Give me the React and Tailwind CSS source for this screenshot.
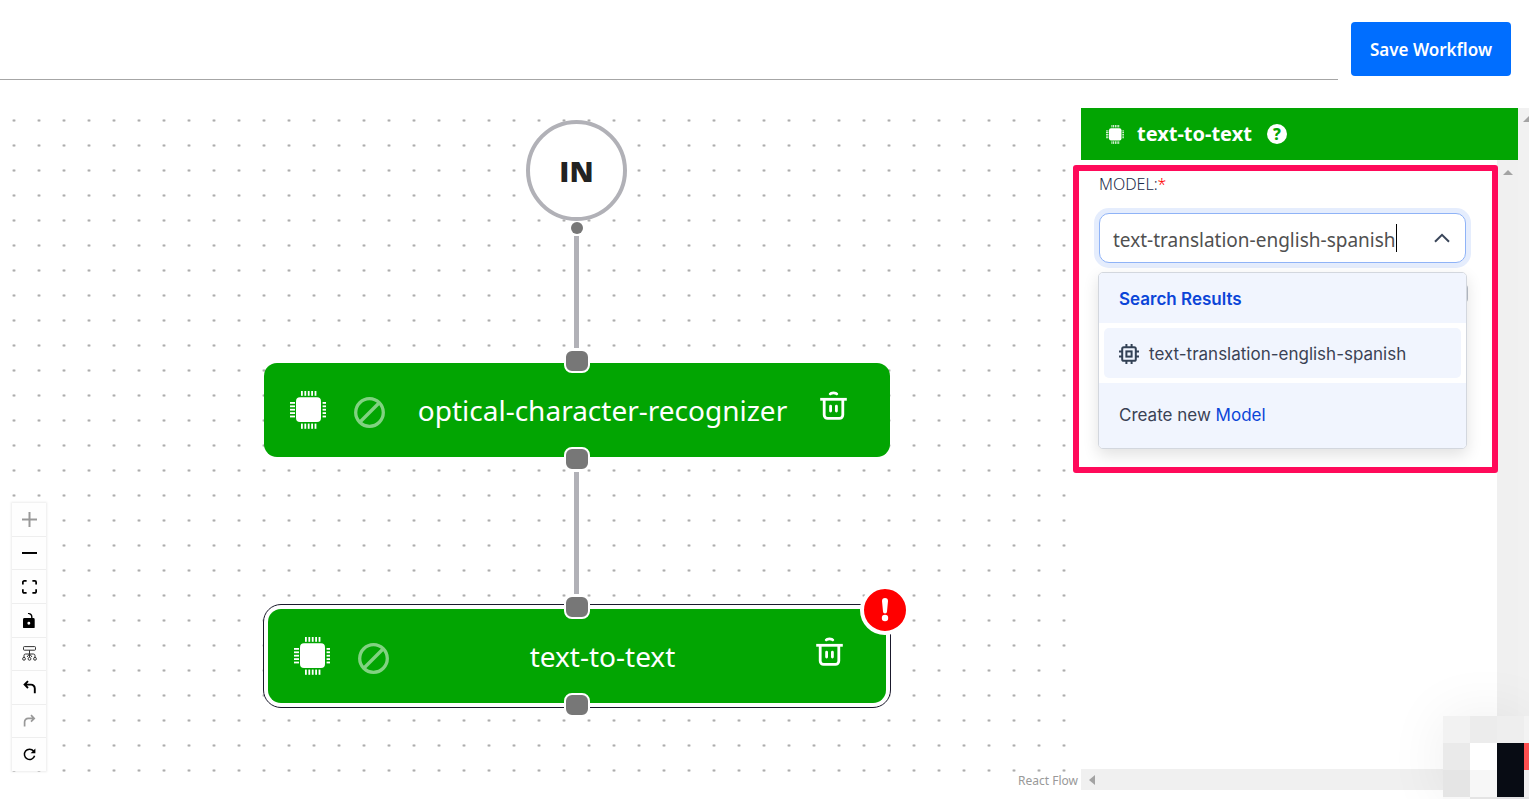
import React from "react";

const flowText = "font-['Noto_Sans','Open_Sans',sans-serif]";

function ChipIcon({ className }) {
  const pins = [11, 14.4, 17.8, 21.2, 24.6];
  return (
    <svg className={className} viewBox="0 0 36 38" fill="currentColor" aria-hidden="true">
      <rect x="6" y="6.3" width="25" height="24.7" rx="4" />
      {pins.map((p) => (
        <g key={p}>
          <rect x={p} y="0" width="1.8" height="4.8" />
          <rect x={p} y="32.6" width="1.8" height="5.2" />
          <rect x="0" y={p} width="5" height="1.8" />
          <rect x="32.6" y={p} width="3.4" height="1.8" />
        </g>
      ))}
    </svg>
  );
}

function DisableIcon() {
  return (
    <svg className="h-[38px] w-[31px]" viewBox="0 0 31 38" fill="none" stroke="currentColor" strokeWidth="3.3" aria-hidden="true">
      <circle cx="15.5" cy="21.5" r="13.8" />
      <path d="M6 31 25 12" />
    </svg>
  );
}

function TrashIcon() {
  return (
    <svg className="h-[38px] w-[27px]" viewBox="0 0 27 38" fill="none" stroke="currentColor" strokeWidth="2.8" strokeLinecap="round" aria-hidden="true">
      <path d="M10.2 2.9C11 1.6 16 1.6 16.8 2.9" />
      <path d="M1.6 8.3H25.4" strokeLinecap="square" />
      <path d="M4.2 9V24a3.4 3.4 0 0 0 3.4 3.4H19.4A3.4 3.4 0 0 0 22.8 24V9" strokeLinecap="butt" />
      <path d="M10.6 15.2V20M16.4 15.2V20" />
    </svg>
  );
}

function Handle({ className }) {
  return (
    <span className={`absolute left-1/2 h-6 w-[26px] -translate-x-1/2 rounded-[8px] border-2 border-white bg-[#777777] ${className}`} />
  );
}

function NodeBody({ title }) {
  return (
    <div className="flex h-[94px] w-full items-center rounded-[13px] bg-[#02a502] pr-[43px] pl-[26px] text-white">
      <ChipIcon className="h-[38px] w-9" />
      <button type="button" aria-label={`Disable ${title}`} className="ml-7 opacity-50">
        <DisableIcon />
      </button>
      <span className={`flex-1 text-center text-[28px] leading-[38px] ${flowText}`}>{title}</span>
      <button type="button" aria-label={`Delete ${title}`}>
        <TrashIcon />
      </button>
    </div>
  );
}

const controls = [
  {
    label: "Zoom in",
    dim: true,
    icon: (
      <svg viewBox="0 0 32 32" className="w-[15px]" fill="currentColor">
        <path d="M32 18.133H18.133V32h-4.266V18.133H0v-4.266h13.867V0h4.266v13.867H32z" />
      </svg>
    ),
  },
  {
    label: "Zoom out",
    icon: (
      <svg viewBox="0 0 32 5" className="w-[15px]" fill="currentColor">
        <path d="M0 0h32v4.2H0z" />
      </svg>
    ),
  },
  {
    label: "Fit view",
    icon: (
      <svg viewBox="0 0 32 30" className="w-[15px]" fill="currentColor">
        <path d="M3.692 4.63c0-.53.4-.938.939-.938h5.215V0H4.708C2.13 0 0 2.054 0 4.63v5.216h3.692V4.631zM27.354 0h-5.2v3.692h5.17c.53 0 .984.4.984.939v5.215H32V4.631A4.624 4.624 0 0027.354 0zm.954 24.83c0 .532-.4.94-.939.94h-5.215v3.768h5.215c2.577 0 4.631-2.13 4.631-4.707v-5.139h-3.692v5.139zm-23.677.94c-.531 0-.939-.4-.939-.94v-5.138H0v5.139c0 2.577 2.13 4.707 4.708 4.707h5.138V25.77H4.631z" />
      </svg>
    ),
  },
  {
    label: "Toggle interactivity",
    icon: (
      <svg viewBox="0 0 25 32" className="w-3" fill="currentColor">
        <path d="M21.333 10.667H19.81V7.619C19.81 3.429 16.38 0 12.19 0c-4.114 1.828-1.37 2.133.305 2.438 1.676.305 4.42 2.59 4.42 5.181v3.048H3.047A3.056 3.056 0 000 13.714v15.238A3.056 3.056 0 003.048 32h18.285a3.056 3.056 0 003.048-3.048V13.714a3.056 3.056 0 00-3.048-3.047zM12.19 24.533a3.056 3.056 0 01-3.047-3.047 3.056 3.056 0 013.047-3.048 3.056 3.056 0 013.048 3.048 3.056 3.056 0 01-3.048 3.047z" />
      </svg>
    ),
  },
  {
    label: "Auto layout",
    icon: (
      <svg viewBox="0 0 15 15" className="w-[15px]" fill="none" stroke="#333" strokeWidth="1">
        <rect x="1.5" y="0.6" width="12" height="3.6" rx="0.8" />
        <path d="M7.5 4.2V11.2M2 11.2V9.6a1.6 1.6 0 0 1 1.6-1.6H11.4A1.6 1.6 0 0 1 13 9.6V11.2M5 11 7.5 8 10 11" />
        <circle cx="2" cy="12.8" r="1.4" />
        <circle cx="7.5" cy="12.8" r="1.4" />
        <circle cx="13" cy="12.8" r="1.4" />
      </svg>
    ),
  },
  {
    label: "Undo",
    icon: (
      <svg viewBox="0 0 15 15" className="w-[15px]" fill="none" stroke="currentColor" strokeWidth="1.9">
        <path d="M6 1.2 2.6 4.6 6 8M2.8 4.6H9A3.8 3.8 0 0 1 12.8 8.4V13.2" />
      </svg>
    ),
  },
  {
    label: "Redo",
    dim: true,
    icon: (
      <svg viewBox="0 0 15 15" className="w-[15px]" fill="none" stroke="currentColor" strokeWidth="1.7">
        <path d="M9 1.2 12.2 4.4 9 7.6M12 4.4H6.2A3.6 3.6 0 0 0 2.6 8V12.6" />
      </svg>
    ),
  },
  {
    label: "Reset",
    icon: (
      <svg viewBox="0 0 15 15" className="w-[15px]" fill="none" stroke="currentColor" strokeWidth="1.5">
        <path d="M11.6 4A5.2 5.2 0 1 0 12.6 8.8" />
        <path d="M13.4 1.4V6.2H8.6z" fill="currentColor" stroke="none" />
      </svg>
    ),
  },
];

function Canvas() {
  return (
    <section aria-label="Workflow canvas" className="relative min-w-0 flex-1 overflow-hidden">
      <svg className="absolute inset-0 h-full w-full" aria-hidden="true">
        <defs>
          <pattern id="dots" x="1.5" y="0" width="25" height="25" patternUnits="userSpaceOnUse">
            <circle cx="12.5" cy="12.5" r="1.3" fill="#a3a3a3" />
          </pattern>
        </defs>
        <rect width="100%" height="100%" fill="url(#dots)" />
        <path d="M576.5 128V240M576.5 364V486" stroke="#b1b1b7" strokeWidth="5" />
      </svg>

      <div className="absolute top-3 left-[526px] flex size-[101px] items-center justify-center rounded-full border-4 border-[#b1b1b7] bg-white font-['Open_Sans',sans-serif] text-[29px] font-extrabold text-[#222222]">
        IN
      </div>
      <span className="absolute top-[114px] left-[571px] size-3 rounded-full bg-[#777777]" />

      <div className="absolute top-[255px] left-[264px] w-[626px]">
        <NodeBody title="optical-character-recognizer" />
        <Handle className="-top-[14px]" />
        <Handle className="-bottom-[14px]" />
      </div>

      <div className="absolute top-[496px] left-[263px] w-[628px] rounded-[18px] border border-[#1a192b] bg-white p-1">
        <NodeBody title="text-to-text" />
        <Handle className="-top-[10px]" />
        <Handle className="-bottom-[10px]" />
        <span className="absolute -top-5 -right-5 flex size-[50px] items-center justify-center rounded-full border-4 border-white bg-[#ff0000]" role="img" aria-label="Node has an error">
          <svg viewBox="0 0 10 24" className="h-6 w-[10px]" fill="#fff">
            <path d="M2 3a3 3 0 0 1 6 0L7 13.4a2 2 0 0 1-4 0z" />
            <circle cx="5" cy="20" r="3.2" />
          </svg>
        </span>
      </div>

      <div className="absolute bottom-[19px] left-3 flex h-[268px] w-[34px] flex-col bg-[#fefefe] shadow-[0_0_2px_1px_rgba(0,0,0,0.08)]">
        {controls.map((c) => (
          <button
            key={c.label}
            type="button"
            aria-label={c.label}
            className={`flex flex-1 items-center justify-center border-b border-[#eeeeee] last:border-b-0 ${c.dim ? "text-[#999999]" : "text-black"}`}
          >
            {c.icon}
          </button>
        ))}
      </div>

      <a href="#react-flow" className={`absolute right-0 bottom-0 bg-white/50 px-[3px] pt-px pb-px text-[12px] leading-4 text-[#999999] ${flowText}`}>
        React Flow
      </a>
    </section>
  );
}

function ModelSelect() {
  return (
    <div className="px-[18px] pt-[13px]">
      <label htmlFor="model" className={`block text-[16px] leading-[22px] font-light text-[#1c2b4a] ${flowText}`}>
        MODEL:<span className="text-[#ff0000]">*</span>
      </label>
      <div className="relative mt-[18px] mr-[13px]">
        <div className="flex h-[50px] items-center rounded-[10px] border border-[#8fb3f7] bg-white pr-[15px] pl-[13px] shadow-[0_0_0_5px_#e5edfd]">
          <input
            id="model"
            type="text"
            defaultValue="text-translation-english-spanish"
            className={`field-sizing-content bg-transparent pt-[3px] text-[19px] leading-7 text-[#505050] outline-none ${flowText}`}
          />
          <span className="h-7 w-px bg-black" />
          <svg viewBox="0 0 16 10" className="ml-auto h-[10px] w-4" fill="none" stroke="#3a465a" strokeWidth="2" aria-hidden="true">
            <path d="M1 8.8 8 1.8 15 8.8" />
          </svg>
        </div>
        <div className="mt-5 -mr-[2px] h-[21px] rounded-[5px] border border-[#b9bfc9]" />

        <div className="absolute -inset-x-px top-[59px] overflow-hidden rounded-[5px] border border-[#d3d7de] bg-white font-['Inter',sans-serif] text-[17px] leading-6 text-[#3a4254] shadow-[0_6px_16px_rgba(0,0,0,0.12)]">
          <h2 className="bg-[#f1f5fe] px-5 pt-[14px] pb-3 text-[17px] font-semibold text-[#0b45d8]">Search Results</h2>
          <div className="p-[5px]">
            <button type="button" className="flex h-[50px] w-full items-center gap-[10px] rounded-[5px] bg-[#f1f5fe] px-[15px] pt-[2px]">
              <svg viewBox="0 0 20 20" className="size-5" fill="none" stroke="#334155" strokeWidth="2" aria-hidden="true">
                <rect x="3.2" y="3.2" width="13.6" height="13.6" rx="1.6" />
                <rect x="7.4" y="7.4" width="5.2" height="5.2" />
                <path d="M7.4 0V3M12.6 0V3M7.4 17V20M12.6 17V20M0 7.4H3M0 12.6H3M17 7.4H20M17 12.6H20" />
              </svg>
              text-translation-english-spanish
            </button>
          </div>
          <p className="bg-[#f1f5fe] px-5 pt-5 pb-[21px]">
            Create new{" "}
            <a href="#new-model" className="text-[#0b45d8]">
              Model
            </a>
          </p>
        </div>
      </div>
    </div>
  );
}

function SidePanel() {
  return (
    <aside className="relative flex w-[448px] shrink-0">
      <div className="flex min-w-0 flex-1 flex-col">
        <header className="flex h-[52px] items-center bg-[#02a502] pl-[25px] text-white">
          <ChipIcon className="h-[19px] w-[18px]" />
          <h1 className={`ml-[13px] text-[20px] leading-7 font-bold ${flowText}`}>text-to-text</h1>
          <button type="button" aria-label="Help" className={`ml-[15px] flex size-5 items-center justify-center rounded-full bg-white text-[16px] leading-5 font-extrabold text-[#02a502] ${flowText}`}>
            ?
          </button>
        </header>
        <div className="flex flex-1">
          <div className="min-w-0 flex-1">
            <ModelSelect />
          </div>
          <div className="w-[21px] bg-[#f0f0f0] pt-[10px]">
            <svg viewBox="0 0 10 5" className="mx-auto h-[5px] w-[10px]" fill="#a3a3a3" aria-hidden="true">
              <path d="M0 5 5 0 10 5z" />
            </svg>
          </div>
        </div>
        <div className="flex h-[21px] items-center bg-[#f0f0f0] pl-2">
          <svg viewBox="0 0 6 10" className="h-[10px] w-[6px]" fill="#a3a3a3" aria-hidden="true">
            <path d="M6 0 0 5 6 10z" />
          </svg>
        </div>
      </div>
      <div className="w-[11px] bg-[#f1f1f1] pt-2 pl-[5px]">
        <svg viewBox="0 0 6 6" className="h-[6px] w-[6px]" fill="#a3a3a3" aria-hidden="true">
          <path d="M0 6 6 0V6z" />
        </svg>
      </div>
      <div className="pointer-events-none absolute top-[57px] -left-2 h-[308px] w-[425px] rounded-[3px] border-6 border-[#ff0a5a]" />
    </aside>
  );
}

function Mosaic() {
  return (
    <div className="pointer-events-none fixed right-0 bottom-0 grid grid-cols-[27px_27px_27px_5px] grid-rows-[27px_27px_27px_2px] shadow-[0_0_60px_rgba(0,0,0,0.07)]" aria-hidden="true">
      <span className="bg-[#f2f2f2]" />
      <span className="bg-[#ececec]" />
      <span className="bg-[#eeeeee]" />
      <span className="bg-[#f3f3f3]" />
      <span className="bg-[#eaeaea]" />
      <span className="bg-white" />
      <span className="bg-[#080c14]" />
      <span className="bg-[#ff5050]" />
      <span className="bg-[#e5e5e5]" />
      <span className="bg-[#f7f7f7]" />
      <span className="bg-[#080c14]" />
      <span className="bg-[#f0eff0]" />
      <span className="bg-[#f8f8f8]" />
      <span className="bg-[#e4e4e4]" />
      <span className="bg-[#e0e0e2]" />
      <span className="bg-[#e4e4e4]" />
    </div>
  );
}

export default function App() {
  return (
    <div className="flex min-h-screen flex-col bg-white pb-[9px]">
      <header className="flex h-[108px] items-start gap-[13px] pr-[18px]">
        <input type="text" aria-label="Workflow name" className="h-20 min-w-0 flex-1 border-b border-[#a6a6a6] bg-transparent outline-none" />
        <button type="button" className={`mt-[22px] h-[54px] w-40 rounded-[4px] bg-[#006eff] pt-[2px] text-[17px] font-semibold text-white ${flowText}`}>
          Save Workflow
        </button>
      </header>
      <main className="flex flex-1">
        <Canvas />
        <SidePanel />
      </main>
      <Mosaic />
    </div>
  );
}
